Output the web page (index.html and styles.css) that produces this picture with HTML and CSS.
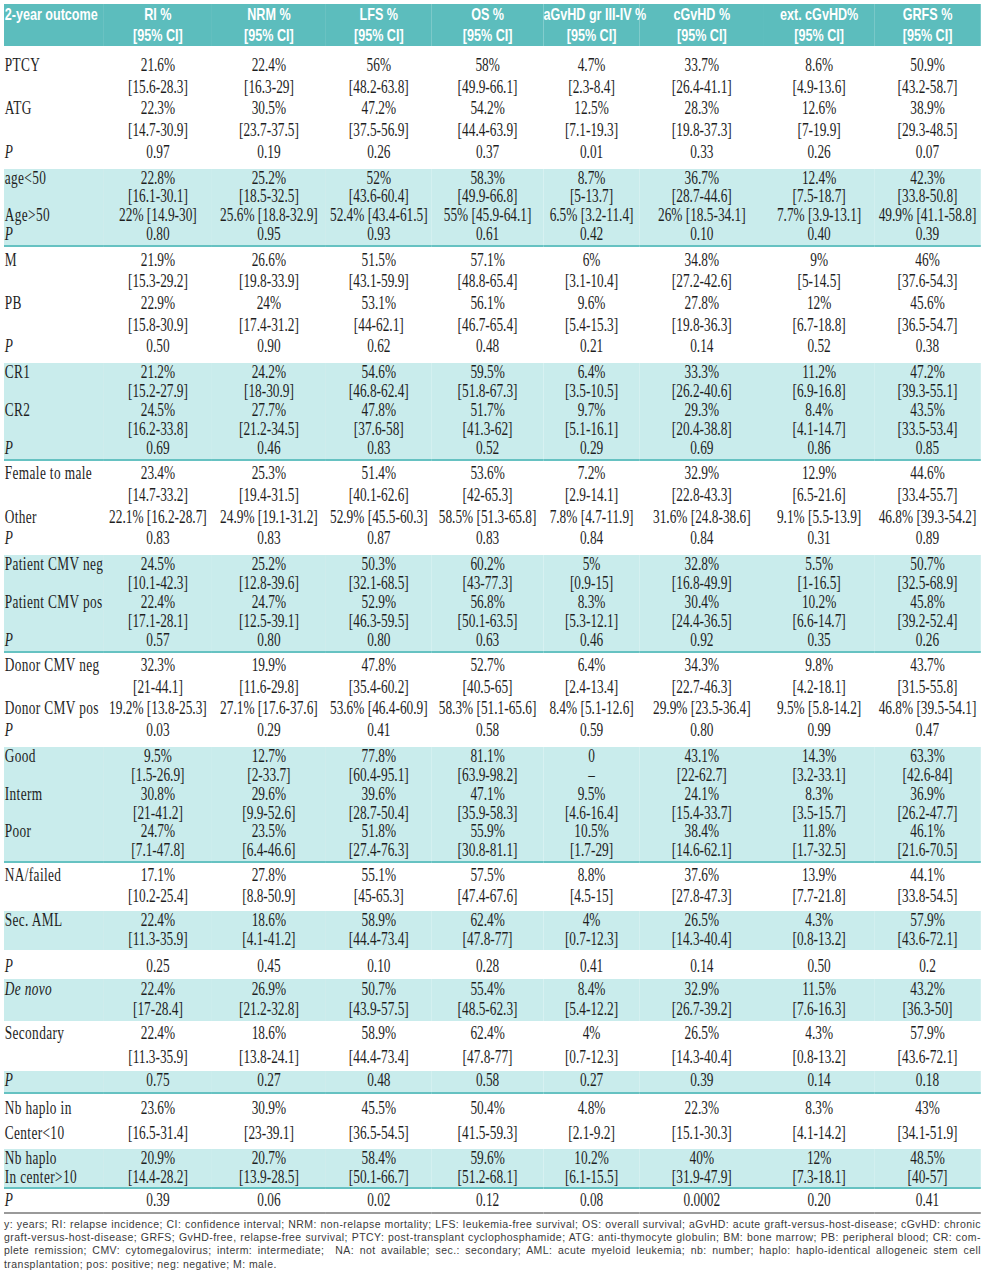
FILE: index.html
```html
<!DOCTYPE html>
<html lang="en">
<head>
<meta charset="utf-8">
<title>2-year outcome table</title>
<link rel="stylesheet" href="styles.css">
</head>
<body>
<div class="page">
<div class="tblwrap">
<table class="tbl">
<colgroup>
<col class="c0"><col class="c1"><col class="c2"><col class="c3"><col class="c4"><col class="c5"><col class="c6"><col class="c7"><col class="c8">
</colgroup>
<thead>
<tr>
<th class="lab">2-year outcome</th>
<th>RI %<br>[95% CI]</th>
<th>NRM %<br>[95% CI]</th>
<th>LFS %<br>[95% CI]</th>
<th>OS %<br>[95% CI]</th>
<th>aGvHD gr III-IV %<br>[95% CI]</th>
<th>cGvHD %<br>[95% CI]</th>
<th>ext. cGvHD%<br>[95% CI]</th>
<th>GRFS %<br>[95% CI]</th>
</tr>
</thead>

<tbody class="w g1">
<tr class="first"><td class="lab">PTCY</td><td>21.6%<br>[15.6-28.3]</td><td>22.4%<br>[16.3-29]</td><td>56%<br>[48.2-63.8]</td><td>58%<br>[49.9-66.1]</td><td>4.7%<br>[2.3-8.4]</td><td>33.7%<br>[26.4-41.1]</td><td>8.6%<br>[4.9-13.6]</td><td>50.9%<br>[43.2-58.7]</td></tr>
<tr><td class="lab">ATG</td><td>22.3%<br>[14.7-30.9]</td><td>30.5%<br>[23.7-37.5]</td><td>47.2%<br>[37.5-56.9]</td><td>54.2%<br>[44.4-63.9]</td><td>12.5%<br>[7.1-19.3]</td><td>28.3%<br>[19.8-37.3]</td><td>12.6%<br>[7-19.9]</td><td>38.9%<br>[29.3-48.5]</td></tr>
<tr class="last"><td class="lab"><i>P</i></td><td>0.97</td><td>0.19</td><td>0.26</td><td>0.37</td><td>0.01</td><td>0.33</td><td>0.26</td><td>0.07</td></tr>
</tbody>

<tbody class="b">
<tr><td class="lab">age&lt;50</td><td>22.8%<br>[16.1-30.1]</td><td>25.2%<br>[18.5-32.5]</td><td>52%<br>[43.6-60.4]</td><td>58.3%<br>[49.9-66.8]</td><td>8.7%<br>[5-13.7]</td><td>36.7%<br>[28.7-44.6]</td><td>12.4%<br>[7.5-18.7]</td><td>42.3%<br>[33.8-50.8]</td></tr>
<tr><td class="lab">Age&gt;50</td><td>22% [14.9-30]</td><td>25.6% [18.8-32.9]</td><td>52.4% [43.4-61.5]</td><td>55% [45.9-64.1]</td><td>6.5% [3.2-11.4]</td><td>26% [18.5-34.1]</td><td>7.7% [3.9-13.1]</td><td>49.9% [41.1-58.8]</td></tr>
<tr class="last ln"><td class="lab"><i>P</i></td><td>0.80</td><td>0.95</td><td>0.93</td><td>0.61</td><td>0.42</td><td>0.10</td><td>0.40</td><td>0.39</td></tr>
</tbody>

<tbody class="w">
<tr class="first"><td class="lab">M</td><td>21.9%<br>[15.3-29.2]</td><td>26.6%<br>[19.8-33.9]</td><td>51.5%<br>[43.1-59.9]</td><td>57.1%<br>[48.8-65.4]</td><td>6%<br>[3.1-10.4]</td><td>34.8%<br>[27.2-42.6]</td><td>9%<br>[5-14.5]</td><td>46%<br>[37.6-54.3]</td></tr>
<tr><td class="lab">PB</td><td>22.9%<br>[15.8-30.9]</td><td>24%<br>[17.4-31.2]</td><td>53.1%<br>[44-62.1]</td><td>56.1%<br>[46.7-65.4]</td><td>9.6%<br>[5.4-15.3]</td><td>27.8%<br>[19.8-36.3]</td><td>12%<br>[6.7-18.8]</td><td>45.6%<br>[36.5-54.7]</td></tr>
<tr class="last"><td class="lab"><i>P</i></td><td>0.50</td><td>0.90</td><td>0.62</td><td>0.48</td><td>0.21</td><td>0.14</td><td>0.52</td><td>0.38</td></tr>
</tbody>

<tbody class="b">
<tr><td class="lab">CR1</td><td>21.2%<br>[15.2-27.9]</td><td>24.2%<br>[18-30.9]</td><td>54.6%<br>[46.8-62.4]</td><td>59.5%<br>[51.8-67.3]</td><td>6.4%<br>[3.5-10.5]</td><td>33.3%<br>[26.2-40.6]</td><td>11.2%<br>[6.9-16.8]</td><td>47.2%<br>[39.3-55.1]</td></tr>
<tr><td class="lab">CR2</td><td>24.5%<br>[16.2-33.8]</td><td>27.7%<br>[21.2-34.5]</td><td>47.8%<br>[37.6-58]</td><td>51.7%<br>[41.3-62]</td><td>9.7%<br>[5.1-16.1]</td><td>29.3%<br>[20.4-38.8]</td><td>8.4%<br>[4.1-14.7]</td><td>43.5%<br>[33.5-53.4]</td></tr>
<tr class="last ln"><td class="lab"><i>P</i></td><td>0.69</td><td>0.46</td><td>0.83</td><td>0.52</td><td>0.29</td><td>0.69</td><td>0.86</td><td>0.85</td></tr>
</tbody>

<tbody class="w">
<tr class="first"><td class="lab">Female to male</td><td>23.4%<br>[14.7-33.2]</td><td>25.3%<br>[19.4-31.5]</td><td>51.4%<br>[40.1-62.6]</td><td>53.6%<br>[42-65.3]</td><td>7.2%<br>[2.9-14.1]</td><td>32.9%<br>[22.8-43.3]</td><td>12.9%<br>[6.5-21.6]</td><td>44.6%<br>[33.4-55.7]</td></tr>
<tr><td class="lab">Other</td><td>22.1% [16.2-28.7]</td><td>24.9% [19.1-31.2]</td><td>52.9% [45.5-60.3]</td><td>58.5% [51.3-65.8]</td><td>7.8% [4.7-11.9]</td><td>31.6% [24.8-38.6]</td><td>9.1% [5.5-13.9]</td><td>46.8% [39.3-54.2]</td></tr>
<tr class="last"><td class="lab"><i>P</i></td><td>0.83</td><td>0.83</td><td>0.87</td><td>0.83</td><td>0.84</td><td>0.84</td><td>0.31</td><td>0.89</td></tr>
</tbody>

<tbody class="b">
<tr><td class="lab">Patient CMV neg</td><td>24.5%<br>[10.1-42.3]</td><td>25.2%<br>[12.8-39.6]</td><td>50.3%<br>[32.1-68.5]</td><td>60.2%<br>[43-77.3]</td><td>5%<br>[0.9-15]</td><td>32.8%<br>[16.8-49.9]</td><td>5.5%<br>[1-16.5]</td><td>50.7%<br>[32.5-68.9]</td></tr>
<tr><td class="lab">Patient CMV pos</td><td>22.4%<br>[17.1-28.1]</td><td>24.7%<br>[12.5-39.1]</td><td>52.9%<br>[46.3-59.5]</td><td>56.8%<br>[50.1-63.5]</td><td>8.3%<br>[5.3-12.1]</td><td>30.4%<br>[24.4-36.5]</td><td>10.2%<br>[6.6-14.7]</td><td>45.8%<br>[39.2-52.4]</td></tr>
<tr class="last ln"><td class="lab"><i>P</i></td><td>0.57</td><td>0.80</td><td>0.80</td><td>0.63</td><td>0.46</td><td>0.92</td><td>0.35</td><td>0.26</td></tr>
</tbody>

<tbody class="w">
<tr class="first"><td class="lab">Donor CMV neg</td><td>32.3%<br>[21-44.1]</td><td>19.9%<br>[11.6-29.8]</td><td>47.8%<br>[35.4-60.2]</td><td>52.7%<br>[40.5-65]</td><td>6.4%<br>[2.4-13.4]</td><td>34.3%<br>[22.7-46.3]</td><td>9.8%<br>[4.2-18.1]</td><td>43.7%<br>[31.5-55.8]</td></tr>
<tr><td class="lab">Donor CMV pos</td><td>19.2% [13.8-25.3]</td><td>27.1% [17.6-37.6]</td><td>53.6% [46.4-60.9]</td><td>58.3% [51.1-65.6]</td><td>8.4% [5.1-12.6]</td><td>29.9% [23.5-36.4]</td><td>9.5% [5.8-14.2]</td><td>46.8% [39.5-54.1]</td></tr>
<tr class="last"><td class="lab"><i>P</i></td><td>0.03</td><td>0.29</td><td>0.41</td><td>0.58</td><td>0.59</td><td>0.80</td><td>0.99</td><td>0.47</td></tr>
</tbody>

<tbody class="b">
<tr><td class="lab">Good</td><td>9.5%<br>[1.5-26.9]</td><td>12.7%<br>[2-33.7]</td><td>77.8%<br>[60.4-95.1]</td><td>81.1%<br>[63.9-98.2]</td><td>0<br>&ndash;</td><td>43.1%<br>[22-62.7]</td><td>14.3%<br>[3.2-33.1]</td><td>63.3%<br>[42.6-84]</td></tr>
<tr><td class="lab">Interm</td><td>30.8%<br>[21-41.2]</td><td>29.6%<br>[9.9-52.6]</td><td>39.6%<br>[28.7-50.4]</td><td>47.1%<br>[35.9-58.3]</td><td>9.5%<br>[4.6-16.4]</td><td>24.1%<br>[15.4-33.7]</td><td>8.3%<br>[3.5-15.7]</td><td>36.9%<br>[26.2-47.7]</td></tr>
<tr class="last ln"><td class="lab">Poor</td><td>24.7%<br>[7.1-47.8]</td><td>23.5%<br>[6.4-46.6]</td><td>51.8%<br>[27.4-76.3]</td><td>55.9%<br>[30.8-81.1]</td><td>10.5%<br>[1.7-29]</td><td>38.4%<br>[14.6-62.1]</td><td>11.8%<br>[1.7-32.5]</td><td>46.1%<br>[21.6-70.5]</td></tr>
</tbody>

<tbody class="w g9">
<tr class="first last"><td class="lab">NA/failed</td><td>17.1%<br>[10.2-25.4]</td><td>27.8%<br>[8.8-50.9]</td><td>55.1%<br>[45-65.3]</td><td>57.5%<br>[47.4-67.6]</td><td>8.8%<br>[4.5-15]</td><td>37.6%<br>[27.8-47.3]</td><td>13.9%<br>[7.7-21.8]</td><td>44.1%<br>[33.8-54.5]</td></tr>
</tbody>

<tbody class="b">
<tr class="last"><td class="lab">Sec. AML</td><td>22.4%<br>[11.3-35.9]</td><td>18.6%<br>[4.1-41.2]</td><td>58.9%<br>[44.4-73.4]</td><td>62.4%<br>[47.8-77]</td><td>4%<br>[0.7-12.3]</td><td>26.5%<br>[14.3-40.4]</td><td>4.3%<br>[0.8-13.2]</td><td>57.9%<br>[43.6-72.1]</td></tr>
</tbody>

<tbody class="w gp1">
<tr><td class="lab"><i>P</i></td><td>0.25</td><td>0.45</td><td>0.10</td><td>0.28</td><td>0.41</td><td>0.14</td><td>0.50</td><td>0.2</td></tr>
</tbody>

<tbody class="b gdn">
<tr class="last"><td class="lab"><i>De novo</i></td><td>22.4%<br>[17-28.4]</td><td>26.9%<br>[21.2-32.8]</td><td>50.7%<br>[43.9-57.5]</td><td>55.4%<br>[48.5-62.3]</td><td>8.4%<br>[5.4-12.2]</td><td>32.9%<br>[26.7-39.2]</td><td>11.5%<br>[7.6-16.3]</td><td>43.2%<br>[36.3-50]</td></tr>
</tbody>

<tbody class="w gsec">
<tr><td class="lab">Secondary</td><td>22.4%<br>[11.3-35.9]</td><td>18.6%<br>[13.8-24.1]</td><td>58.9%<br>[44.4-73.4]</td><td>62.4%<br>[47.8-77]</td><td>4%<br>[0.7-12.3]</td><td>26.5%<br>[14.3-40.4]</td><td>4.3%<br>[0.8-13.2]</td><td>57.9%<br>[43.6-72.1]</td></tr>
</tbody>

<tbody class="b gp2">
<tr class="last ln"><td class="lab"><i>P</i></td><td>0.75</td><td>0.27</td><td>0.48</td><td>0.58</td><td>0.27</td><td>0.39</td><td>0.14</td><td>0.18</td></tr>
</tbody>

<tbody class="w gnb">
<tr><td class="lab">Nb haplo in<br>Center&lt;10</td><td>23.6%<br>[16.5-31.4]</td><td>30.9%<br>[23-39.1]</td><td>45.5%<br>[36.5-54.5]</td><td>50.4%<br>[41.5-59.3]</td><td>4.8%<br>[2.1-9.2]</td><td>22.3%<br>[15.1-30.3]</td><td>8.3%<br>[4.1-14.2]</td><td>43%<br>[34.1-51.9]</td></tr>
</tbody>

<tbody class="b gnb2">
<tr class="last ln"><td class="lab">Nb haplo<br>In center&gt;10</td><td>20.9%<br>[14.4-28.2]</td><td>20.7%<br>[13.9-28.5]</td><td>58.4%<br>[50.1-66.7]</td><td>59.6%<br>[51.2-68.1]</td><td>10.2%<br>[6.1-15.5]</td><td>40%<br>[31.9-47.9]</td><td>12%<br>[7.3-18.1]</td><td>48.5%<br>[40-57]</td></tr>
</tbody>

<tbody class="w gend">
<tr class="endrow"><td class="lab"><i>P</i></td><td>0.39</td><td>0.06</td><td>0.02</td><td>0.12</td><td>0.08</td><td>0.0002</td><td>0.20</td><td>0.41</td></tr>
</tbody>
</table>
</div>

<div class="notes">
<div class="nl">y: years; RI: relapse incidence; CI: confidence interval; NRM: non-relapse mortality; LFS: leukemia-free survival; OS: overall survival; aGvHD: acute graft-versus-host-disease; cGvHD: chronic</div>
<div class="nl">graft-versus-host-disease; GRFS; GvHD-free, relapse-free survival; PTCY: post-transplant cyclophosphamide; ATG: anti-thymocyte globulin; BM: bone marrow; PB: peripheral blood; CR: com-</div>
<div class="nl">plete remission; CMV: cytomegalovirus; interm: intermediate;&nbsp; NA: not available; sec.: secondary; AML: acute myeloid leukemia; nb: number; haplo: haplo-identical allogeneic stem cell</div>
<div class="nl lastline">transplantation; pos: positive; neg: negative; M: male.</div>
</div>
</div>
</body>
</html>
```

FILE: styles.css
```css
html, body {
  margin: 0;
  padding: 0;
  background: #ffffff;
}

.page {
  padding: 4px 5px 0 4px;
  width: 977px;
}

.tblwrap {
  width: 977px;
  overflow: hidden;
}

.tbl {
  width: 1320px;
  table-layout: fixed;
  border-collapse: collapse;
  border-spacing: 0;
  transform: scaleX(0.74);
  transform-origin: 0 0;
  font-family: "Liberation Serif", "Times New Roman", serif;
  font-size: 18px;
  color: #1e1e1e;
}

.c0 { width: 135px; }
.c1 { width: 146px; }
.c2 { width: 154px; }
.c3 { width: 143px; }
.c4 { width: 151px; }
.c5 { width: 130px; }
.c6 { width: 168px; }
.c7 { width: 149px; }
.c8 { width: 144px; }

.tbl th {
  background: #5cbdbd;
  color: #ffffff;
  font-family: "Liberation Sans", Arial, sans-serif;
  font-weight: bold;
  font-size: 17px;
  line-height: 21px;
  text-align: center;
  vertical-align: top;
  padding: 0;
  white-space: nowrap;
}

.tbl th.lab {
  text-align: left;
  padding-left: 1px;
}

.tbl td {
  padding: 0;
  text-align: center;
  vertical-align: top;
  white-space: nowrap;
}

.tbl td.lab {
  text-align: left;
  padding-left: 1px;
  letter-spacing: 0.5px;
}

/* white groups */
.w td {
  line-height: 21.7px;
}

.w tr.first td {
  padding-top: 2.5px;
}

.w tr.last td {
  padding-bottom: 5px;
}

.g1 tr.first td {
  padding-top: 9px;
}

.g9 tr.first td {
  padding-top: 1.5px;
  padding-bottom: 3px;
}

/* banded groups */
.b td {
  background: #c9ecec;
  line-height: 18.9px;
}

.b tr.last td {
  padding-bottom: 1px;
}

.b tr.ln td {
  border-bottom: 2px solid #66c2c2;
}

.gp1 td {
  padding-top: 5.5px;
  padding-bottom: 2px;
}

.gdn td {
  line-height: 20px;
}

.gdn tr.last td {
  padding-bottom: 2px;
}

.gsec td {
  line-height: 24px;
  padding-bottom: 2px;
}

.gp2 tr.last td {
  padding-top: 0;
  padding-bottom: 2px;
  line-height: 19px;
}

.gnb td {
  line-height: 25px;
  padding-top: 2px;
  padding-bottom: 2.5px;
}

.gnb2 td {
  line-height: 19px;
}

.gnb2 tr.last td {
  padding-bottom: 0;
}

.gend td {
  padding-top: 1.6px;
  padding-bottom: 0;
  border-bottom: 2px solid #9a9a9a;
}

/* footnote */
.notes {
  margin-top: 3.5px;
  font-family: "Liberation Sans", Arial, sans-serif;
  font-size: 10.5px;
  line-height: 13.4px;
  letter-spacing: 0.45px;
  color: #3a3a3a;
}

.nl {
  text-align: justify;
  text-align-last: justify;
  white-space: nowrap;
}

.nl.lastline {
  text-align-last: left;
}
```
